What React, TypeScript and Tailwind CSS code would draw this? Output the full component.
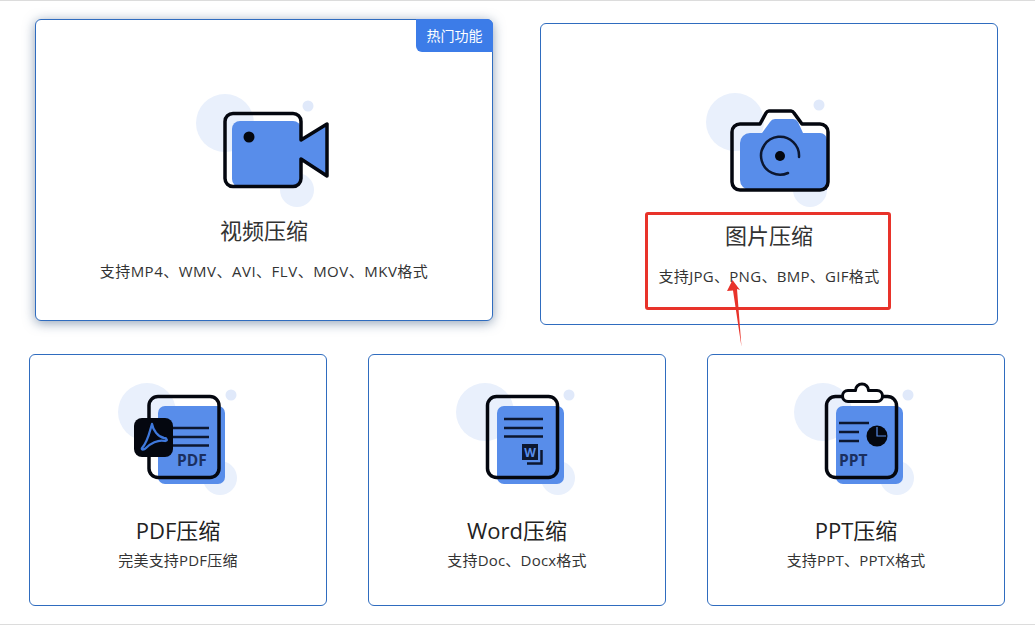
import React from 'react';

const INK = '#04070f';
const BLUE = '#588dea';
const NAVY = '#1b2f5f';

function Bubbles({ big, small, low }: { big: number[]; small: number[]; low: number[] }) {
  return <>
      <circle cx={big[0]} cy={big[1]} r="29" fill="#e9f0fc" />
      <circle cx={small[0]} cy={small[1]} r="5.5" fill="#e0e9fa" />
      <circle cx={low[0]} cy={low[1]} r="17" fill="#e9f0fc" />
    </>;
}

function VideoIcon() {
  return <svg width="150" height="110" viewBox="189 84 150 110" className="block overflow-visible">
      <Bubbles big={[225, 123]} small={[308, 106]} low={[297, 190]} />
      <rect x="232" y="121" width="69" height="66" rx="8" fill={BLUE} />
      <path d="M301 140 L327 124 V176 L301 159 Z" fill={BLUE} />
      <path d="M233 113.5 H293 a8 8 0 0 1 8 8 V140 L327 124 V176 L301 159 V178.5 a8 8 0 0 1 -8 8 H233 a8 8 0 0 1 -8 -8 V121.5 a8 8 0 0 1 8 -8 Z" fill="none" stroke={INK} strokeWidth="3.5" strokeLinejoin="round" />
      <circle cx="249" cy="137" r="5.5" fill={INK} />
    </svg>;
}

function CameraIcon() {
  return <svg width="150" height="110" viewBox="694 88 150 110" className="block overflow-visible">
      <Bubbles big={[735, 122]} small={[819, 105]} low={[810, 190]} />
      <path d="M750 133 H762 L770 122 a6 6 0 0 1 5 -3 H793 a6 6 0 0 1 5 3 L803 133 H820 a7 7 0 0 1 7 7 V190 H750 a10 10 0 0 1 -10 -10 V143 a10 10 0 0 1 10 -10 Z" fill={BLUE} />
      <path d="M740 124 H760 L766 113 a4 4 0 0 1 3 -2 H791 a4 4 0 0 1 3 2 L802 124 H820 a8 8 0 0 1 8 8 V182 a8 8 0 0 1 -8 8 H740 a8 8 0 0 1 -8 -8 V132 a8 8 0 0 1 8 -8 Z" fill="none" stroke={INK} strokeWidth="3.5" strokeLinejoin="round" />
      <path d="M799 157 A19 19 0 1 0 788 173" fill="none" stroke="#0c1730" strokeWidth="2.5" strokeLinecap="round" />
      <circle cx="780" cy="156" r="5" fill={INK} />
    </svg>;
}

function PdfIcon() {
  return <svg width="150" height="110" viewBox="103 380 150 110" className="block overflow-visible">
      <Bubbles big={[147, 412]} small={[231, 395]} low={[220, 478]} />
      <rect x="158" y="406" width="67" height="78" rx="7" fill={BLUE} />
      <rect x="149" y="396.5" width="70" height="81" rx="9" fill="none" stroke={INK} strokeWidth="3.5" />
      <path d="M173 428 H209 M173 437 H209 M173 445.500 H209" stroke="#0c1730" strokeWidth="2.500" />
      <rect x="134" y="418" width="39" height="39" rx="8" fill={INK} />
      <path d="M152 424 C150 430 148 442 142 448 C141 450 144 450 146 448 C150 444 158 439 165 441 C168 441 167 438 164 438 C158 437 153 430 152 424 Z" fill="none" stroke="#3e78dc" strokeWidth="2.300" strokeLinejoin="round" />
      <text x="177" y="466" fontSize="15.500" fontWeight="700" fill={NAVY} className="[font-family:'Open_Sans',sans-serif]">PDF</text>
    </svg>;
}

function WordIcon() {
  return <svg width="150" height="110" viewBox="442 380 150 110" className="block overflow-visible">
      <Bubbles big={[485, 412]} small={[569, 395]} low={[558, 478]} />
      <rect x="497" y="406" width="67" height="78" rx="7" fill={BLUE} />
      <rect x="487.500" y="396.500" width="70" height="81" rx="9" fill="none" stroke={INK} strokeWidth="3.5" />
      <path d="M504 419 H543 M504 428 H543 M504 436.500 H543" stroke="#0c1730" strokeWidth="2.500" />
      <path d="M541.500 450 V463.500 H527" fill="none" stroke="#0c1730" strokeWidth="2.500" />
      <rect x="522" y="444" width="16" height="16" fill="#0c1730" />
      <text x="530" y="457" fontSize="12" fontWeight="700" textAnchor="middle" fill={BLUE} className="[font-family:'Open_Sans',sans-serif]">W</text>
    </svg>;
}

function PptIcon() {
  return <svg width="150" height="110" viewBox="781 380 150 110" className="block overflow-visible">
      <Bubbles big={[823, 412]} small={[908, 395]} low={[897, 478]} />
      <rect x="836" y="406" width="67" height="78" rx="7" fill={BLUE} />
      <rect x="826.500" y="396.500" width="70" height="81" rx="9" fill="none" stroke={INK} strokeWidth="3.5" />
      <path d="M855.500 390.500 a6.500 6.500 0 0 1 13 0 h8.500 a5.500 5.500 0 0 1 0 11 H848 a5.500 5.500 0 0 1 0 -11 Z" fill="#fff" stroke={INK} strokeWidth="3" strokeLinejoin="round" />
      <path d="M839 423 H869 M839 432 H859 M839 441 H859" stroke="#0c1730" strokeWidth="2.500" />
      <circle cx="877" cy="436" r="10.500" fill={INK} />
      <path d="M877 427 V436 H886" fill="none" stroke={BLUE} strokeWidth="1.200" />
      <text x="839" y="466" fontSize="15.500" fontWeight="700" fill={NAVY} className="[font-family:'Open_Sans',sans-serif]">PPT</text>
    </svg>;
}

function TopCard({ icon, title, desc, hot }: { icon: React.ReactNode; title: string; desc: string; hot?: boolean }) {
  return <div className={`relative flex h-[302px] w-[458px] flex-col items-center rounded-md border border-[#2f6cbf] bg-white pt-[64px] ${hot ? '-translate-y-1 shadow-[0_2px_12px_rgba(50,80,120,0.55)]' : ''}`}>
      {hot && <div className="absolute -right-px -top-px flex h-[33px] w-[77px] items-center justify-center rounded-bl-md rounded-tr-md bg-[#3c7ce8] text-sm text-white">
          热门功能
        </div>}
      {icon}
      <div className={`${hot ? 'mt-[21px]' : 'mt-[22px]'} text-[22px] leading-[30px] text-[#333]`}>{title}</div>
      <div className={`mt-[16px] text-[15px] leading-5 text-[#333] ${hot ? 'tracking-[0.5px]' : 'tracking-[0.3px]'}`}>{desc}</div>
    </div>;
}

function SmallCard({ icon, title, desc }: { icon: React.ReactNode; title: string; desc: string }) {
  return <div className="flex h-[252px] w-[298px] flex-col items-center rounded-md border border-[#2f6cbf] bg-white pt-[25px]">
      {icon}
      <div className="mt-[25px] text-[22px] leading-[30px] text-[#222]">{title}</div>
      <div className="mt-[5px] text-[15px] leading-5 tracking-[0.2px] text-[#333]">{desc}</div>
    </div>;
}

export default function App() {
  return <div className="relative h-[625px] w-[1035px] overflow-hidden border-y border-[#dcdcdc] bg-white [font-family:'Open_Sans','Noto_Sans_CJK_SC',sans-serif]">
      <div className="flex gap-[47px] pl-[35px] pt-[22px]">
        <TopCard hot icon={<VideoIcon />} title="视频压缩" desc="支持MP4、WMV、AVI、FLV、MOV、MKV格式" />
        <TopCard icon={<CameraIcon />} title="图片压缩" desc="支持JPG、PNG、BMP、GIF格式" />
      </div>
      <div className="mt-[29px] flex gap-[41px] pl-[29px]">
        <SmallCard icon={<PdfIcon />} title="PDF压缩" desc="完美支持PDF压缩" />
        <SmallCard icon={<WordIcon />} title="Word压缩" desc="支持Doc、Docx格式" />
        <SmallCard icon={<PptIcon />} title="PPT压缩" desc="支持PPT、PPTX格式" />
      </div>

      {/* Red annotation over the image card */}
      <div className="absolute left-[645px] top-[211px] h-[98px] w-[246px] rounded-[3px] border-[3px] border-[#e8332a]" />
      <svg className="absolute left-[720px] top-[275px]" width="30" height="75" viewBox="720 276 30 75">
        <path d="M732.500 280 L740 290 L737 289 L741.500 347 L733 290.500 L727 291 Z" fill="#e8332a" />
      </svg>
    </div>;
}
